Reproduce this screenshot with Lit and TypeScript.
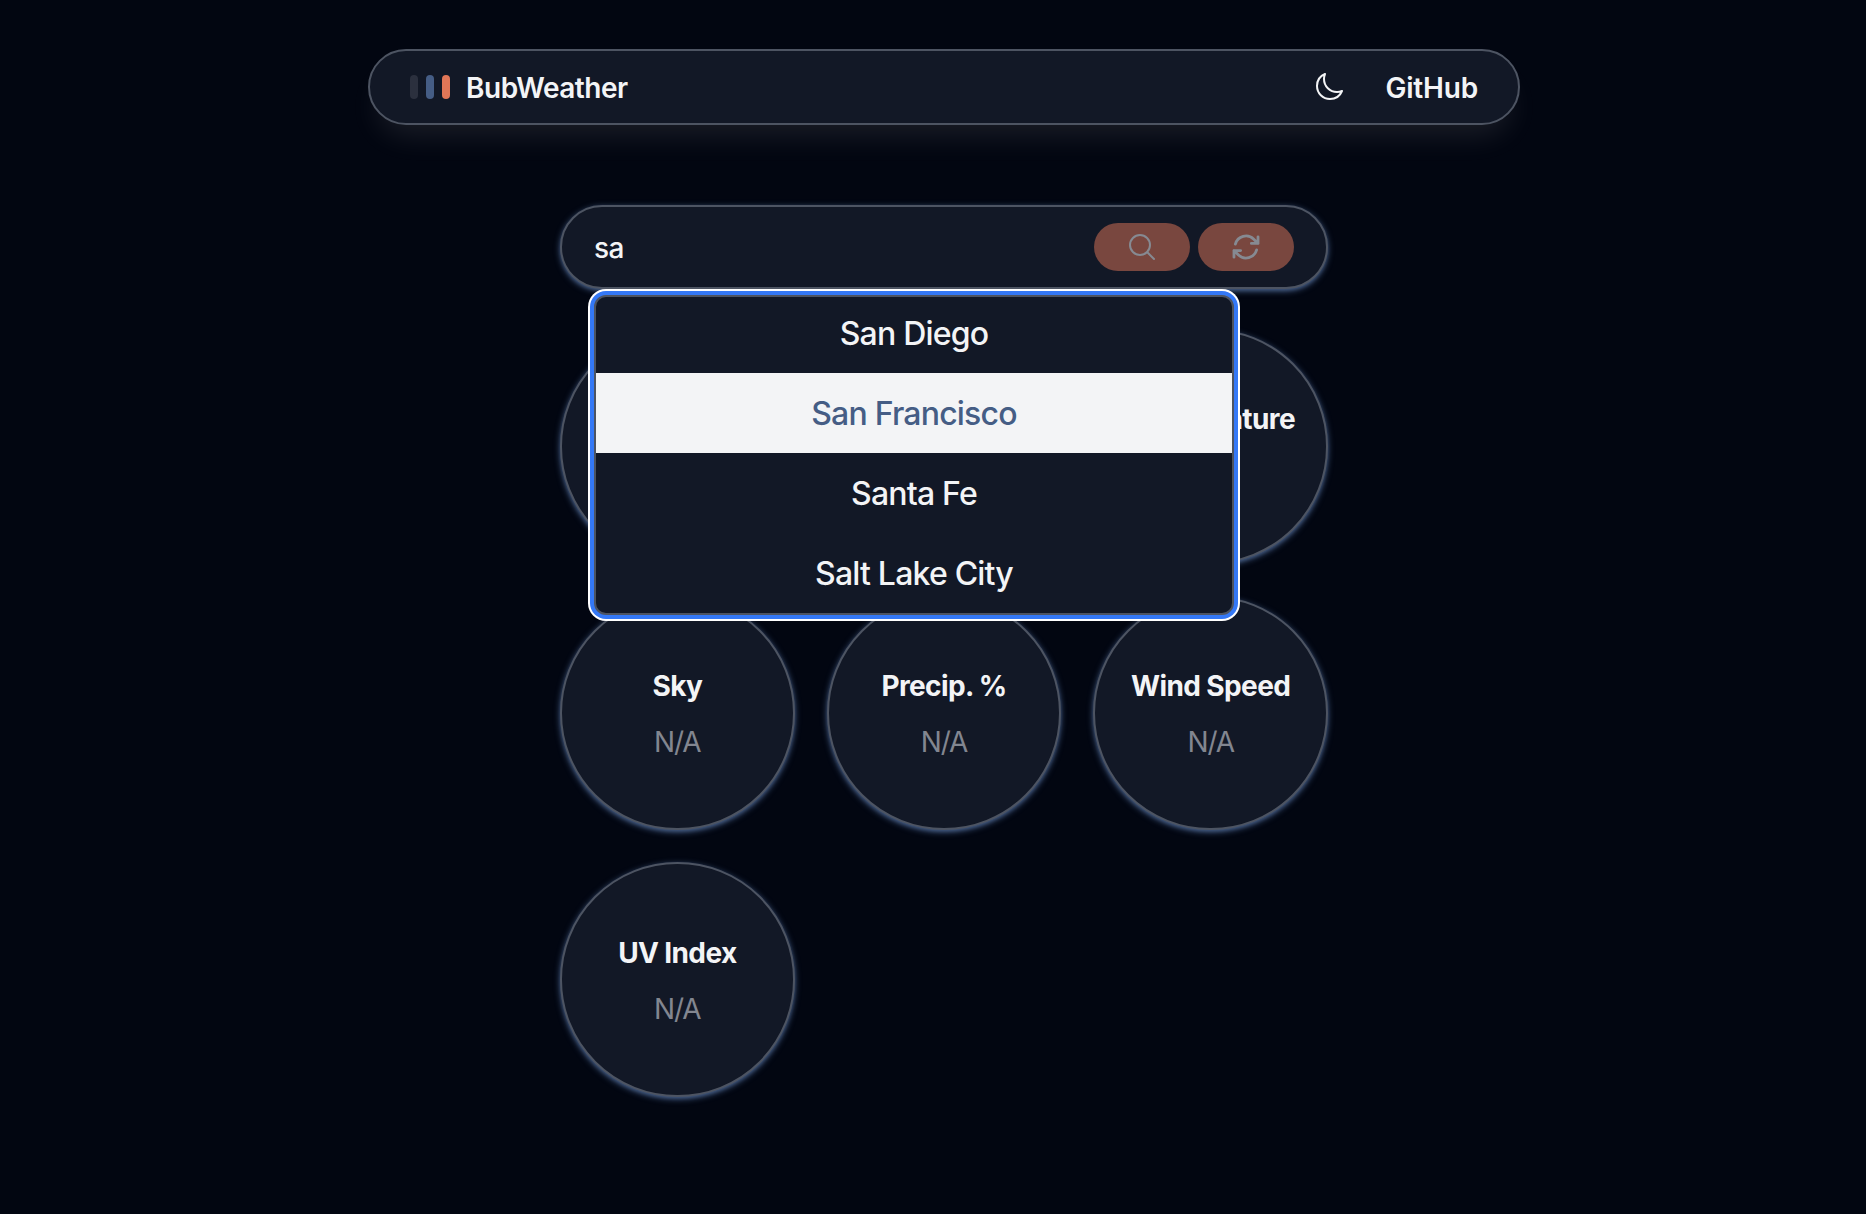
import { LitElement, html, svg, css } from "lit";
import { customElement, property } from "lit/decorators.js";
import { classMap } from "lit/directives/class-map.js";

@customElement("weather-bubble")
export class WeatherBubble extends LitElement {
  @property() label = "";
  @property() value = "";

  static styles = css`
    :host {
      display: flex;
      flex-direction: column;
      align-items: center;
      justify-content: center;
      box-sizing: border-box;
      aspect-ratio: 1;
      min-width: 0;
      padding-top: 2px;
      border: 2px solid #4d5462;
      border-radius: 50%;
      background: #121826;
      box-shadow: 0 2px 6px #455d85, 0 2px 4px -2px #455d85;
    }
    .label {
      min-height: 40px;
      color: #f3f4f6;
      font-size: 28px;
      line-height: 40px;
      font-weight: 700;
      letter-spacing: -0.62px;
      white-space: nowrap;
    }
    .value {
      min-height: 40px;
      margin-top: 16px;
      color: #828690;
      font-size: 28px;
      line-height: 40px;
      letter-spacing: -1.1px;
    }
  `;

  render() {
    return html`<div class="label">${this.label}</div>
      <div class="value">${this.value}</div>`;
  }
}

const moon = svg`<path d="M21.752 15.002A9.72 9.72 0 0 1 18 15.75c-5.385 0-9.75-4.365-9.75-9.75 0-1.33.266-2.597.748-3.752A9.753 9.753 0 0 0 3 11.25C3 16.635 7.365 21 12.75 21a9.753 9.753 0 0 0 9.002-5.998Z"/>`;
const glass = svg`<path d="m21 21-5.197-5.197m0 0A7.5 7.5 0 1 0 5.196 5.196a7.5 7.5 0 0 0 10.607 10.607Z"/>`;
const refresh = svg`<path d="M16.023 9.348h4.992v-.001M2.985 19.644v-4.992m0 0h4.992m-4.993 0 3.181 3.183a8.25 8.25 0 0 0 13.803-3.7M4.031 9.865a8.25 8.25 0 0 1 13.803-3.7l3.181 3.182m0-4.991v4.99"/>`;

interface Metric {
  label: string;
  value: string;
}

@customElement("app-root")
export class AppRoot extends LitElement {
  private cities = ["San Diego", "San Francisco", "Santa Fe", "Salt Lake City"];
  private active = "San Francisco";
  private metrics: Metric[] = [
    { label: "", value: "" },
    { label: "", value: "" },
    { label: "Temperature", value: "" },
    { label: "Sky", value: "N/A" },
    { label: "Precip. %", value: "N/A" },
    { label: "Wind Speed", value: "N/A" },
    { label: "UV Index", value: "N/A" },
  ];

  static styles = css`
    :host {
      display: block;
      box-sizing: border-box;
      height: 1214px;
      overflow: hidden;
      padding: 49px 346px 0 368px;
      background: #020611;
      color: #f3f4f6;
      font-family: Inter, "Liberation Sans", sans-serif;
    }
    .nav {
      display: flex;
      align-items: center;
      box-sizing: border-box;
      height: 76px;
      padding: 0 40px;
      border: 2px solid #4d5462;
      border-radius: 38px;
      background: #121826;
      box-shadow: 0 20px 30px -10px rgba(255, 246, 235, 0.1);
      font-size: 28px;
      font-weight: 600;
    }
    .bars {
      display: flex;
      gap: 8px;
      margin-right: 16px;
    }
    .bar {
      width: 8px;
      height: 24px;
      border-radius: 4px;
      background: #2b303e;
    }
    .bar.blue {
      background: #455d85;
    }
    .bar.coral {
      background: #e07657;
    }
    .brand {
      flex: 1;
      padding-top: 2px;
      letter-spacing: -0.48px;
    }
    .icon {
      display: block;
      width: 32px;
      height: 32px;
      fill: none;
      stroke: currentColor;
      stroke-width: 1.5;
      stroke-linecap: round;
      stroke-linejoin: round;
    }
    .icon.bold {
      stroke-width: 2.1;
    }
    .link {
      margin-left: 40px;
      padding-top: 2px;
      letter-spacing: -0.2px;
    }
    .main {
      width: 768px;
      margin: 80px auto 0;
    }
    .search {
      position: relative;
      display: flex;
      align-items: center;
      box-sizing: border-box;
      height: 84px;
      padding: 0 32px;
      border: 2px solid #4d5462;
      border-radius: 42px;
      background: #121826;
      box-shadow: 0 2px 6px #455d85, 0 2px 4px -2px #455d85;
    }
    .query {
      flex: 1;
      padding-top: 2px;
      font-size: 28px;
      font-weight: 450;
      letter-spacing: -0.7px;
    }
    .button {
      display: flex;
      align-items: center;
      justify-content: center;
      width: 96px;
      height: 48px;
      margin-left: 8px;
      border-radius: 24px;
      background: #79473f;
      color: #868a92;
    }
    .menu {
      position: absolute;
      z-index: 1;
      top: 88px;
      left: 32px;
      box-sizing: border-box;
      width: 640px;
      height: 320px;
      overflow: hidden;
      border: 2px solid #4d5462;
      border-radius: 12px;
      background: #121826;
      box-shadow: 0 0 0 4px #3478f6, 0 0 0 6px #fff;
    }
    .list {
      margin-top: -4px;
    }
    .option {
      height: 80px;
      line-height: 82px;
      text-align: center;
      font-size: 32px;
      font-weight: 450;
      letter-spacing: -0.8px;
    }
    .option.active {
      background: #f3f4f6;
      color: #455d85;
    }
    .grid {
      display: grid;
      grid-template-columns: repeat(3, 1fr);
      gap: 32px;
      margin-top: 40px;
    }
  `;

  private icon(shape: unknown, bold = false) {
    return html`<svg class=${classMap({ icon: true, bold })} viewBox="0 0 24 24">${shape}</svg>`;
  }

  render() {
    return html`
      <nav class="nav">
        <div class="bars">
          <div class="bar"></div>
          <div class="bar blue"></div>
          <div class="bar coral"></div>
        </div>
        <div class="brand">BubWeather</div>
        ${this.icon(moon)}
        <div class="link">GitHub</div>
      </nav>
      <main class="main">
        <div class="search">
          <div class="query">sa</div>
          <div class="button">${this.icon(glass)}</div>
          <div class="button">${this.icon(refresh, true)}</div>
          <div class="menu">
            <div class="list">
              ${this.cities.map(
                (c) => html`<div class=${classMap({ option: true, active: c === this.active })}>${c}</div>`
              )}
            </div>
          </div>
        </div>
        <div class="grid">
          ${this.metrics.map(
            (m) => html`<weather-bubble label=${m.label} value=${m.value}></weather-bubble>`
          )}
        </div>
      </main>
    `;
  }
}
